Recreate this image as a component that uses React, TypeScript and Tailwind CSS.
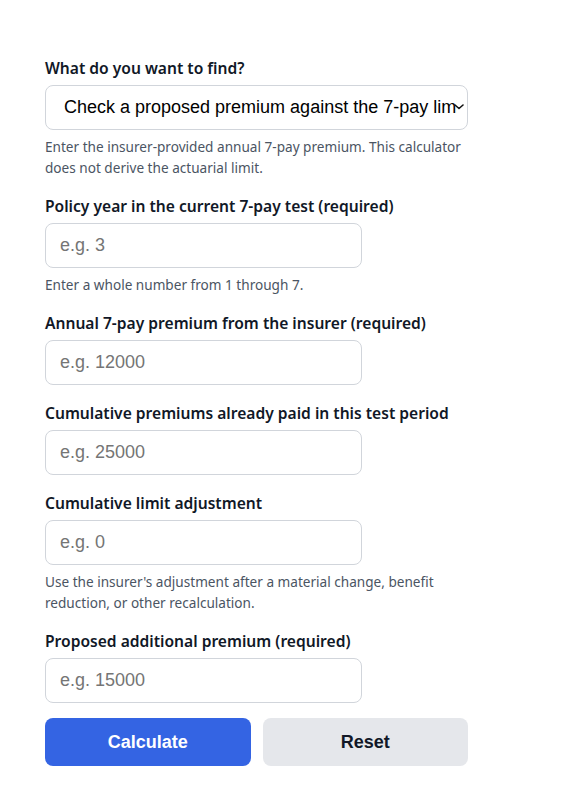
import React from "react";

const fields = [
  {
    id: "year",
    label: "Policy year in the current 7-pay test (required)",
    placeholder: "e.g. 3",
    help: "Enter a whole number from 1 through 7.",
  },
  {
    id: "annual",
    label: "Annual 7-pay premium from the insurer (required)",
    placeholder: "e.g. 12000",
  },
  {
    id: "paid",
    label: "Cumulative premiums already paid in this test period",
    placeholder: "e.g. 25000",
  },
  {
    id: "adjust",
    label: "Cumulative limit adjustment",
    placeholder: "e.g. 0",
    help: "Use the insurer's adjustment after a material change, benefit reduction, or other recalculation.",
  },
  {
    id: "proposed",
    label: "Proposed additional premium (required)",
    placeholder: "e.g. 15000",
  },
];

const labelCls = "block text-[15.6px] leading-6 font-semibold text-[#111827] mb-[5px]";
const helpCls = "mt-[6px] text-[13.6px] leading-[21px] text-[#4b5563]";
const inputCls =
  "block w-3/4 h-[45px] px-3.5 rounded-lg border border-[#d1d5db] bg-white text-[18px] text-black placeholder:text-[#757575] outline-none font-['Liberation_Sans',Arial,sans-serif]";

export default function App() {
  return (
    <div className="min-h-screen bg-white font-['Noto_Sans','Open_Sans',sans-serif]">
      <form className="w-[423px] ml-[45px] pt-[56px] pb-6 flex flex-col gap-4">
        <div>
          <label htmlFor="mode" className={labelCls}>
            What do you want to find?
          </label>
          <div className="relative">
            <select
              id="mode"
              className="block w-full h-[45px] pl-[18px] pr-[10px] appearance-none rounded-lg border border-[#d1d5db] bg-white text-[18px] text-black outline-none font-['Liberation_Sans',Arial,sans-serif]"
              defaultValue="check"
            >
              <option value="check">Check a proposed premium against the 7-pay limit</option>
              <option value="room">Find remaining room under the 7-pay limit</option>
            </select>
            {/* native-looking chevron */}
            <svg
              className="pointer-events-none absolute right-[4px] top-[19px]"
              width="10"
              height="6"
              viewBox="0 0 10 6"
              fill="none"
            >
              <path d="M1 1l4 3.5L9 1" stroke="#111" strokeWidth="1.6" strokeLinecap="round" strokeLinejoin="round" />
            </svg>
          </div>
          <p className={helpCls}>
            Enter the insurer-provided annual 7-pay premium. This calculator does not derive the actuarial limit.
          </p>
        </div>

        {fields.map((f) => (
          <div key={f.id}>
            <label htmlFor={f.id} className={labelCls}>
              {f.label}
            </label>
            <input id={f.id} type="text" inputMode="decimal" placeholder={f.placeholder} className={inputCls} />
            {f.help && <p className={helpCls}>{f.help}</p>}
          </div>
        ))}

        <div className="grid grid-cols-2 gap-3 -mt-px font-['Liberation_Sans',Arial,sans-serif]">
          <button type="button" className="h-12 rounded-lg bg-[#3464e3] text-white text-[18px] font-bold">
            Calculate
          </button>
          <button type="reset" className="h-12 rounded-lg bg-[#e5e7eb] text-[#111827] text-[18px] font-bold">
            Reset
          </button>
        </div>
      </form>
    </div>
  );
}
